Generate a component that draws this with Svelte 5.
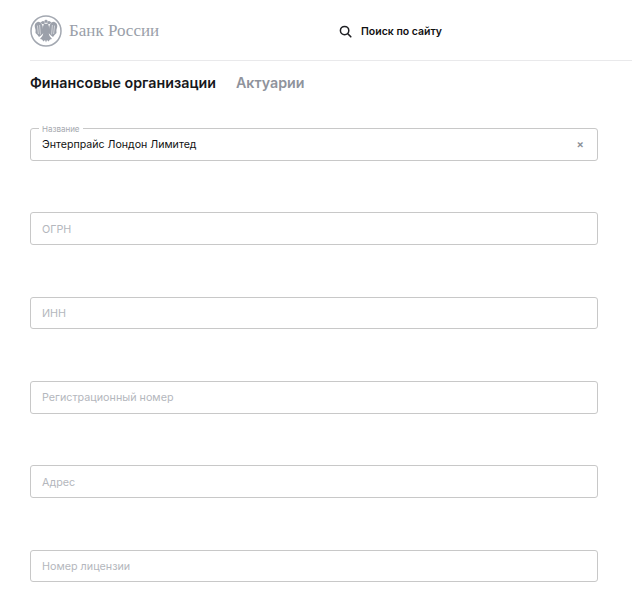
<script>
  const fields = [
    { label: "Название", value: "Энтерпрайс Лондон Лимитед" },
    { label: "ОГРН" },
    { label: "ИНН" },
    { label: "Регистрационный номер" },
    { label: "Адрес" },
    { label: "Номер лицензии" },
  ];
</script>

{#snippet eagleHalf()}
  <circle cx="13" cy="7.6" r="1.7" />
  <path d="M11.8 6.8L9.8 8l2.2.6zM16 4.6l-2 1.4 2 2.4zM14 8.5l2 .5v9.5h-3l-.2-6z" />
  <path d="M12.6 11C11.6 8.6 9.8 6.6 7.6 6.9 5.5 7.3 4.4 9.6 4.8 12l.8 3-.1 3 2 2 1.5 2 2-1.5 2.5-2.5z" />
  <path d="M16 18h-2.6l-1 3-2.4 3 2 .5 1.5 2 1.5-1.5.999 2.5z" />
  <path d="M7.4 10.5l1 8.5M9.6 10l.8 9.5" stroke="#fff" stroke-width=".55" fill="none" />
{/snippet}

<div class="page">
  <header class="header">
    <a class="logo" href="#top">
      <svg width="32" height="32" viewBox="0 0 32 32" aria-hidden="true">
        <circle cx="16" cy="16" r="15" fill="none" stroke="#a3a8b1" stroke-width="1.5" />
        <g fill="#9ba0aa">
          {@render eagleHalf()}
          <g transform="matrix(-1 0 0 1 32 0)">
            {@render eagleHalf()}
          </g>
        </g>
      </svg>
      <span class="logo-text">Банк России</span>
    </a>
    <div class="search">
      <svg width="13" height="13" viewBox="0 0 13 13" aria-hidden="true">
        <circle cx="5.6" cy="5.6" r="4.2" fill="none" stroke="#1f2024" stroke-width="1.5" />
        <path d="M8.8 8.8l3 3" stroke="#1f2024" stroke-width="1.6" stroke-linecap="round" />
      </svg>
      <span>Поиск по сайту</span>
    </div>
  </header>

  <nav class="tabs">
    <span class="tab active">Финансовые организации</span>
    <span class="tab">Актуарии</span>
  </nav>

  <form class="form">
    {#each fields as field}
      <div class="field" class:filled={field.value}>
        {#if field.value}
          <span class="legend">{field.label}</span>
          <span class="value">{field.value}</span>
          <span class="clear">×</span>
        {:else}
          <span class="placeholder">{field.label}</span>
        {/if}
      </div>
    {/each}
  </form>
</div>

<style>
  :global(body) {
    margin: 0;
    background: #fff;
  }

  .page {
    padding-left: 30px;
    font-family: Inter, "Liberation Sans", sans-serif;
    overflow: hidden;
    height: 599px;
    box-sizing: border-box;
  }

  .header {
    display: flex;
    align-items: center;
    height: 60px;
    border-bottom: 1px solid #e9e9eb;
    box-sizing: content-box;
  }

  .logo {
    display: flex;
    align-items: center;
    gap: 7px;
    width: 309px;
    text-decoration: none;
    margin-top: 1px;
  }

  .logo-text {
    font-family: "Liberation Serif", serif;
    font-size: 17px;
    color: #9a9fa9;
  }

  .search {
    display: flex;
    align-items: center;
    gap: 9px;
    font-size: 10.5px;
    font-weight: 600;
    color: #111;
    margin-top: 2px;
  }

  .tabs {
    display: flex;
    gap: 20px;
    padding-top: 13px;
    height: 53px;
    box-sizing: border-box;
  }

  .tab {
    font-size: 14.25px;
    line-height: 17px;
    font-weight: 600;
    color: #8f939c;
  }

  .tab.active {
    color: #17181c;
  }

  .form {
    display: flex;
    flex-direction: column;
    gap: 51.7px;
    width: 568px;
    padding-top: 13.9px;
  }

  .field {
    position: relative;
    display: flex;
    align-items: center;
    height: 32.65px;
    padding: 0 11px;
    border: 1px solid #c8c8c8;
    border-radius: 3px;
    box-sizing: border-box;
    font-size: 10.75px;
  }

  .placeholder {
    color: #b4b7bd;
    padding-top: 1px;
  }

  .value {
    color: #111;
    flex: 1;
    font-size: 10.6px;
  }

  .legend {
    position: absolute;
    top: -4px;
    left: 8px;
    padding: 0 3px;
    background: #fff;
    font-size: 8px;
    line-height: 9px;
    color: #a5a8ae;
  }

  .clear {
    color: #8a8e96;
    font-size: 11px;
    font-weight: 600;
    margin-right: 2px;
  }
</style>
